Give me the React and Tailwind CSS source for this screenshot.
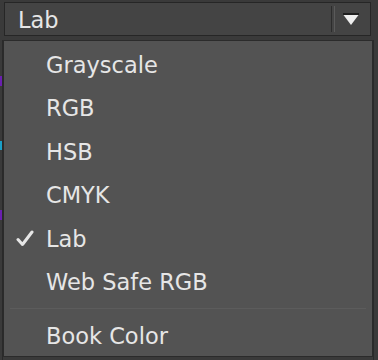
import React from "react";

const items = ["Grayscale", "RGB", "HSB", "CMYK", "Lab", "Web Safe RGB"];

function Check() {
  return (
    <svg width="18" height="17" viewBox="0 0 18 17" className="block">
      <path d="M2 9.5 L6.5 14.5 L16 2" fill="none" stroke="#e6e6e6" strokeWidth="3" strokeLinecap="round" strokeLinejoin="round" />
    </svg>
  );
}

export default function App() {
  return (
    <div
      className="w-[378px] h-[360px] bg-[#3a3a3a] overflow-hidden flex flex-col text-[#e6e6e6]"
      style={{ fontFamily: '"DejaVu Sans", sans-serif' }}
    >
      <div className="h-[40px] flex items-start pt-[2px] pl-[4px]">
        <div className="w-[367px] h-[34px] border border-[#262626] bg-[#444444] flex items-center">
          <div className="flex-1 pl-[13px] pt-[2px] text-[22.5px] leading-none">Lab</div>
          <div className="flex gap-[2px] h-[26px]">
            <div className="w-px bg-[#2c2c2c]" />
            <div className="w-px bg-[#5a5a5a]" />
          </div>
          <div className="w-[35px] flex justify-center pr-[3px]">
            <svg width="16" height="12" viewBox="0 0 16 12">
              <rect x="0" y="0" width="16" height="2" fill="#1e1e1e" />
              <path d="M0.5 2 L15.5 2 L8 12 Z" fill="#eeeeee" />
            </svg>
          </div>
        </div>
      </div>
      <div className="flex flex-1">
        <div className="w-[3px] flex flex-col border-r border-[#2a2a2a]">
          <div className="h-[36px]" />
          <div className="h-[10px] bg-[#6a1fb0]" />
          <div className="h-[55px]" />
          <div className="h-[9px] bg-[#1aa0c8]" />
          <div className="h-[60px]" />
          <div className="h-[10px] bg-[#6a1fb0]" />
        </div>
        <div className="w-[370px] h-[317px] bg-[#535353] border border-[#2b2b2b] pt-[1px] flex flex-col">
          {items.map((t) => (
            <div key={t} className="h-[43.5px] flex items-center shrink-0">
              <div className="w-[42px] flex justify-end pr-[12px] pt-[1px]">
                {t === "Lab" ? <Check /> : null}
              </div>
              <div className="text-[22.5px] leading-none pt-[2px]">{t}</div>
            </div>
          ))}
          <div className="mt-[5px] mb-[4px] mx-[6px] h-px bg-[#3e3e3e] border-b border-[#5c5c5c] box-content" />
          <div className="h-[43.5px] flex items-center shrink-0">
            <div className="w-[42px]" />
            <div className="text-[22.5px] leading-none pt-[2px]">Book Color</div>
          </div>
        </div>
        <div className="flex-1 border-l border-[#2a2a2a]" />
      </div>
    </div>
  );
}
